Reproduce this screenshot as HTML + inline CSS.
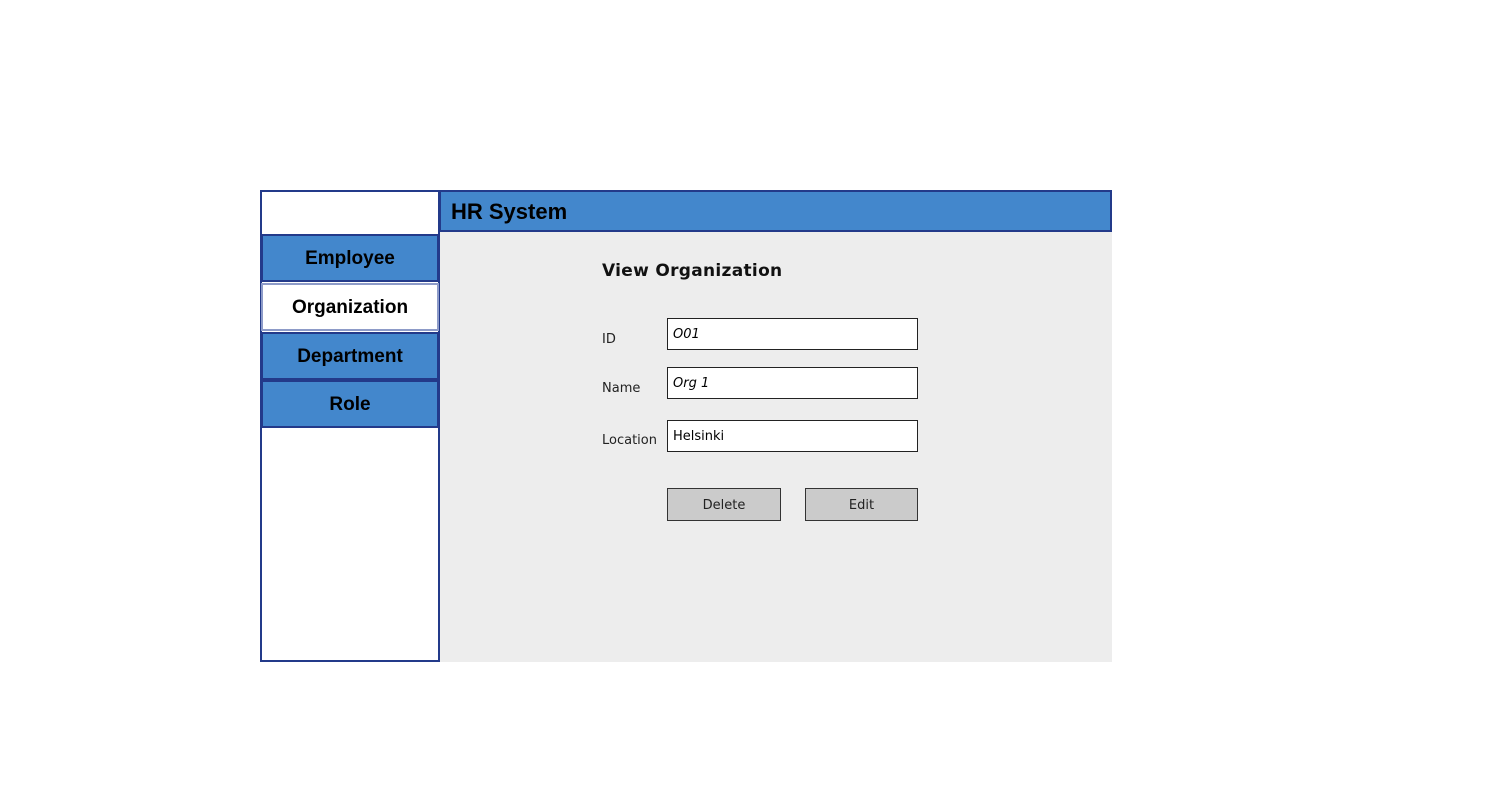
<!DOCTYPE html>
<html><head><style>
body{margin:0;width:1500px;height:790px;background:#fff;position:relative;font-family:"Liberation Sans",sans-serif;overflow:hidden}
div{position:absolute;box-sizing:border-box}
.nav{left:261px;width:178px;border:2px solid #233a8a;background:#4387cc;font-weight:bold;font-size:19px;text-align:center;color:#000}
.lbl{font-family:"DejaVu Sans",sans-serif;font-size:13px;color:#222;left:602px}
.in{left:667px;width:251px;height:32px;border:1px solid #222;background:#fff;font-family:"DejaVu Sans",sans-serif;font-size:13px;padding:8px 0 0 5px;font-style:italic}
.btn{top:488px;height:33px;border:1px solid #333;background:#cbcbcb;font-family:"DejaVu Sans",sans-serif;font-size:13px;text-align:center;line-height:34px;color:#222}
</style></head><body>
<div style="left:439px;top:231px;width:673px;height:431px;background:#ededed"></div>
<div style="left:260px;top:190px;width:180px;height:472px;border:2px solid #233a8a;background:#fff"></div>
<div style="left:439px;top:190px;width:673px;height:42px;background:#4387cc;border:2px solid #233a8a;font-weight:bold;font-size:22px;padding:7px 0 0 10px">HR System</div>
<div class="nav" style="top:234px;height:48px;line-height:46px">Employee</div>
<div class="nav" style="top:283px;height:48px;line-height:46px;background:#fff;border-color:#8d9bc8">Organization</div>
<div class="nav" style="top:332px;height:48px;line-height:46px">Department</div>
<div class="nav" style="top:380px;height:48px;line-height:46px">Role</div>
<div style="left:602px;top:261px;font-family:'DejaVu Sans',sans-serif;font-weight:bold;font-size:17px;color:#111;letter-spacing:0.3px">View Organization</div>
<div class="lbl" style="top:332px">ID</div>
<div class="lbl" style="top:381px">Name</div>
<div class="lbl" style="top:433px">Location</div>
<div class="in" style="top:318px">O01</div>
<div class="in" style="top:367px">Org 1</div>
<div class="in" style="top:420px;font-style:normal">Helsinki</div>
<div class="btn" style="left:667px;width:114px">Delete</div>
<div class="btn" style="left:805px;width:113px">Edit</div>
</body></html>
